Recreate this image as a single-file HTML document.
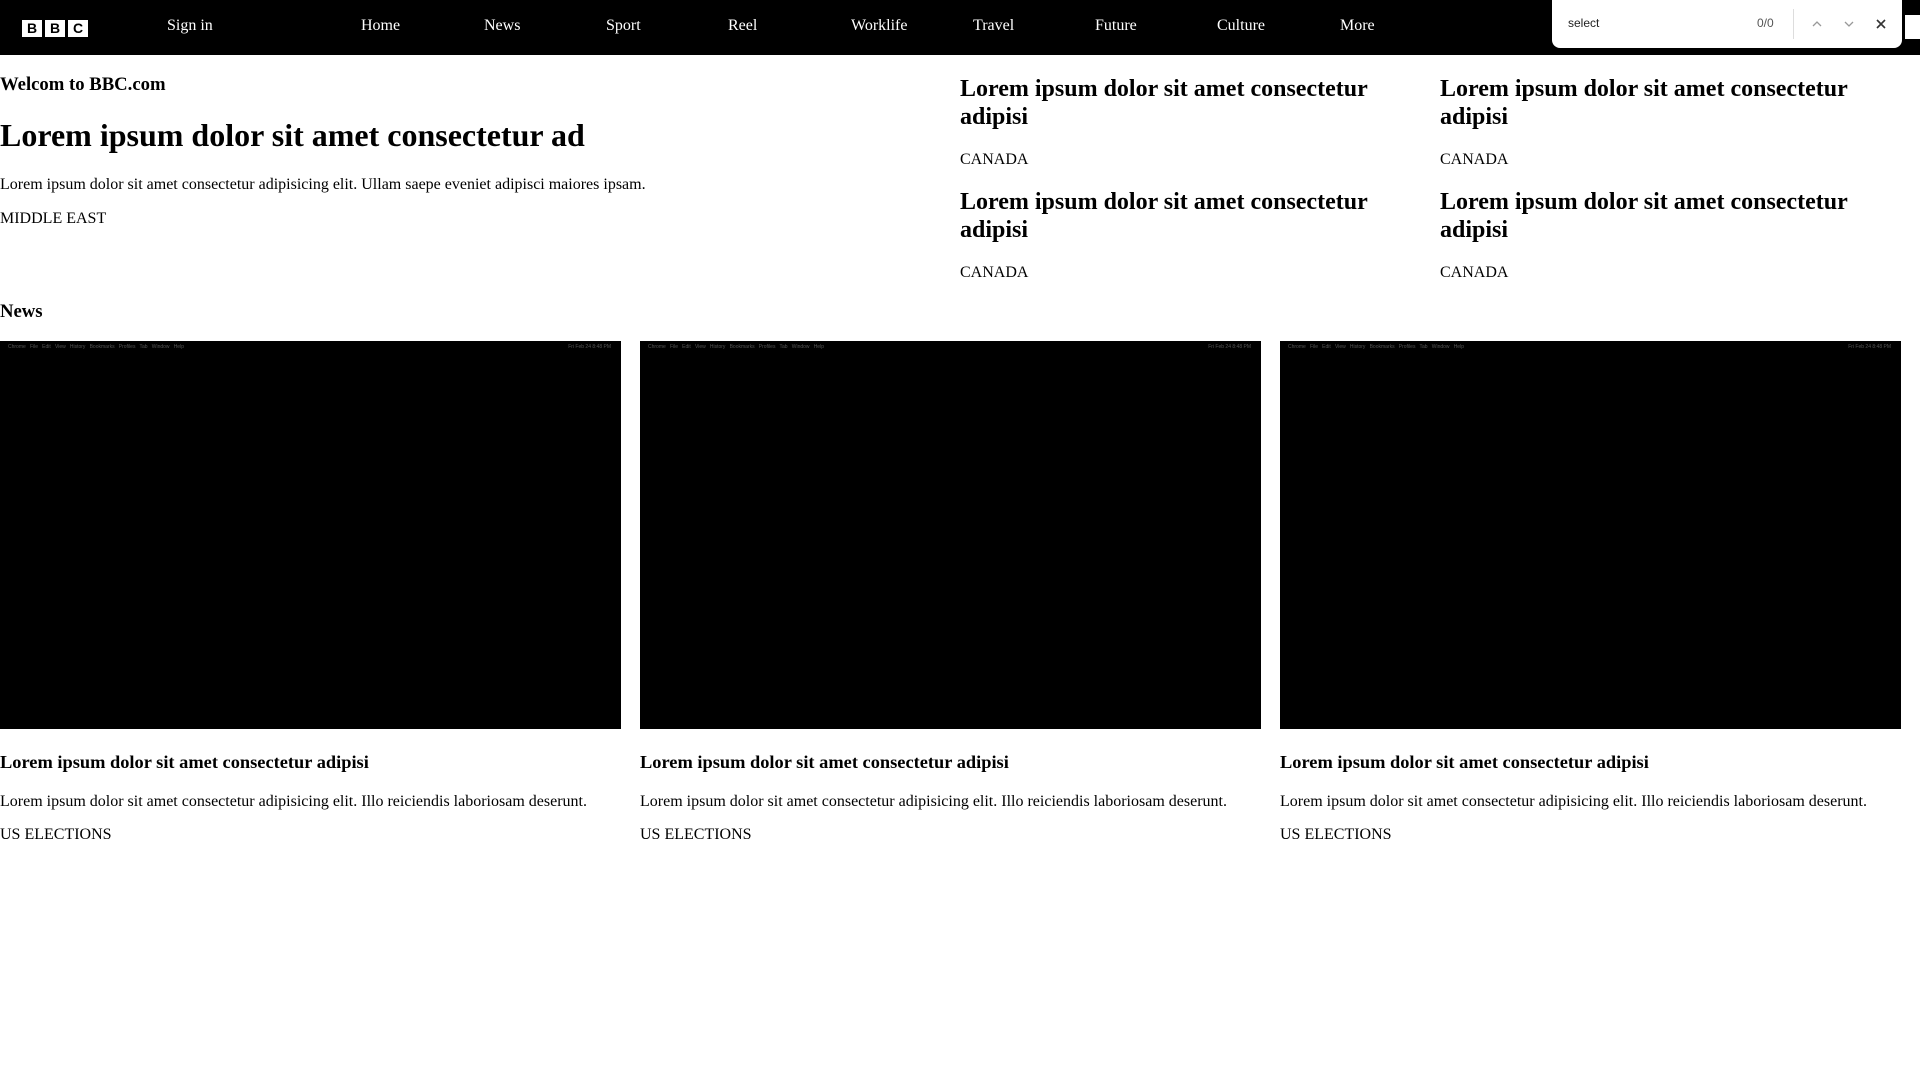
<!DOCTYPE html>
<html><head><meta charset="utf-8"><style>
*{margin:0;padding:0;box-sizing:border-box}
body{width:1920px;height:1080px;background:#fff;font-family:"Liberation Serif",serif;color:#000;position:relative;overflow:hidden}
.a{position:absolute;white-space:nowrap;line-height:1.15}
nav{position:absolute;left:0;top:0;width:1920px;height:55px;background:#000}
.n{position:absolute;top:17px;color:#fff;font-size:16px;line-height:18px}
.logo{position:absolute;left:22px;top:20px;display:flex;gap:3px}
.logo span{width:20px;height:17px;background:#fff;color:#000;font:bold 14px "Liberation Sans",sans-serif;text-align:center;line-height:17px}
.b{font-weight:bold}
.img{position:absolute;top:341px;width:621px;height:388px;background:#000}
.img div{position:absolute;left:8px;top:3px;font:5px "Liberation Sans",sans-serif;color:#555;white-space:nowrap}
.img div.r{left:auto;right:10px}
.find{position:absolute;left:1552px;top:0;width:350px;height:48px;background:#fff;border-radius:0 0 8px 8px;box-shadow:0 1px 4px rgba(0,0,0,.3);font-family:"Liberation Sans",sans-serif}
</style></head><body>
<nav>
<div class="logo"><span>B</span><span>B</span><span>C</span></div>
<div class="n" style="left:167px">Sign in</div>
<div class="n" style="left:361px">Home</div>
<div class="n" style="left:484px">News</div>
<div class="n" style="left:606px">Sport</div>
<div class="n" style="left:728px">Reel</div>
<div class="n" style="left:851px">Worklife</div>
<div class="n" style="left:973px">Travel</div>
<div class="n" style="left:1095px">Future</div>
<div class="n" style="left:1217px">Culture</div>
<div class="n" style="left:1340px">More</div>
</nav>
<div style="position:absolute;left:1905px;top:15px;width:15px;height:24px;background:#fff"></div>
<div class="find">
<div class="a" style="left:16px;top:17px;font-size:12px;color:#222">select</div>
<div class="a" style="left:205px;top:17px;font-size:12px;color:#555">0/0</div>
<div style="position:absolute;left:241px;top:9px;width:1px;height:30px;background:#ddd"></div>
<svg style="position:absolute;left:259px;top:19px" width="12" height="10"><path d="M2 7 L6 3 L10 7" fill="none" stroke="#999" stroke-width="1.3"/></svg>
<svg style="position:absolute;left:291px;top:19px" width="12" height="10"><path d="M2 3 L6 7 L10 3" fill="none" stroke="#999" stroke-width="1.3"/></svg>
<svg style="position:absolute;left:323px;top:18px" width="12" height="12"><path d="M2 2 L10 10 M10 2 L2 10" fill="none" stroke="#333" stroke-width="1.6"/></svg>
</div>

<div class="a b" style="left:0;top:74px;font-size:18.7px">Welcom to BBC.com</div>
<div class="a b" style="left:0;top:117px;font-size:32px">Lorem ipsum dolor sit amet consectetur ad</div>
<div class="a" style="left:0;top:176px;font-size:16px">Lorem ipsum dolor sit amet consectetur adipisicing elit. Ullam saepe eveniet adipisci maiores ipsam.</div>
<div class="a" style="left:0;top:210px;font-size:16px">MIDDLE EAST</div>

<div class="a b" style="left:960px;top:75px;font-size:24px;line-height:28px">Lorem ipsum dolor sit amet consectetur<br>adipisi</div>
<div class="a" style="left:960px;top:151px;font-size:16px">CANADA</div>
<div class="a b" style="left:1440px;top:75px;font-size:24px;line-height:28px">Lorem ipsum dolor sit amet consectetur<br>adipisi</div>
<div class="a" style="left:1440px;top:151px;font-size:16px">CANADA</div>
<div class="a b" style="left:960px;top:188px;font-size:24px;line-height:28px">Lorem ipsum dolor sit amet consectetur<br>adipisi</div>
<div class="a" style="left:960px;top:264px;font-size:16px">CANADA</div>
<div class="a b" style="left:1440px;top:188px;font-size:24px;line-height:28px">Lorem ipsum dolor sit amet consectetur<br>adipisi</div>
<div class="a" style="left:1440px;top:264px;font-size:16px">CANADA</div>

<div class="a b" style="left:0;top:301px;font-size:18.7px">News</div>

<div class="img" style="left:0"><div> Chrome &nbsp; File &nbsp; Edit &nbsp; View &nbsp; History &nbsp; Bookmarks &nbsp; Profiles &nbsp; Tab &nbsp; Window &nbsp; Help</div><div class="r">Fri Feb 24 8:48 PM</div></div>
<div class="img" style="left:640px"><div> Chrome &nbsp; File &nbsp; Edit &nbsp; View &nbsp; History &nbsp; Bookmarks &nbsp; Profiles &nbsp; Tab &nbsp; Window &nbsp; Help</div><div class="r">Fri Feb 24 8:48 PM</div></div>
<div class="img" style="left:1280px"><div> Chrome &nbsp; File &nbsp; Edit &nbsp; View &nbsp; History &nbsp; Bookmarks &nbsp; Profiles &nbsp; Tab &nbsp; Window &nbsp; Help</div><div class="r">Fri Feb 24 8:48 PM</div></div>

<div class="a b" style="left:0;top:752px;font-size:18.4px">Lorem ipsum dolor sit amet consectetur adipisi</div>
<div class="a" style="left:0;top:793px;font-size:16px">Lorem ipsum dolor sit amet consectetur adipisicing elit. Illo reiciendis laboriosam deserunt.</div>
<div class="a" style="left:0;top:826px;font-size:16px">US ELECTIONS</div>
<div class="a b" style="left:640px;top:752px;font-size:18.4px">Lorem ipsum dolor sit amet consectetur adipisi</div>
<div class="a" style="left:640px;top:793px;font-size:16px">Lorem ipsum dolor sit amet consectetur adipisicing elit. Illo reiciendis laboriosam deserunt.</div>
<div class="a" style="left:640px;top:826px;font-size:16px">US ELECTIONS</div>
<div class="a b" style="left:1280px;top:752px;font-size:18.4px">Lorem ipsum dolor sit amet consectetur adipisi</div>
<div class="a" style="left:1280px;top:793px;font-size:16px">Lorem ipsum dolor sit amet consectetur adipisicing elit. Illo reiciendis laboriosam deserunt.</div>
<div class="a" style="left:1280px;top:826px;font-size:16px">US ELECTIONS</div>
</body></html>
